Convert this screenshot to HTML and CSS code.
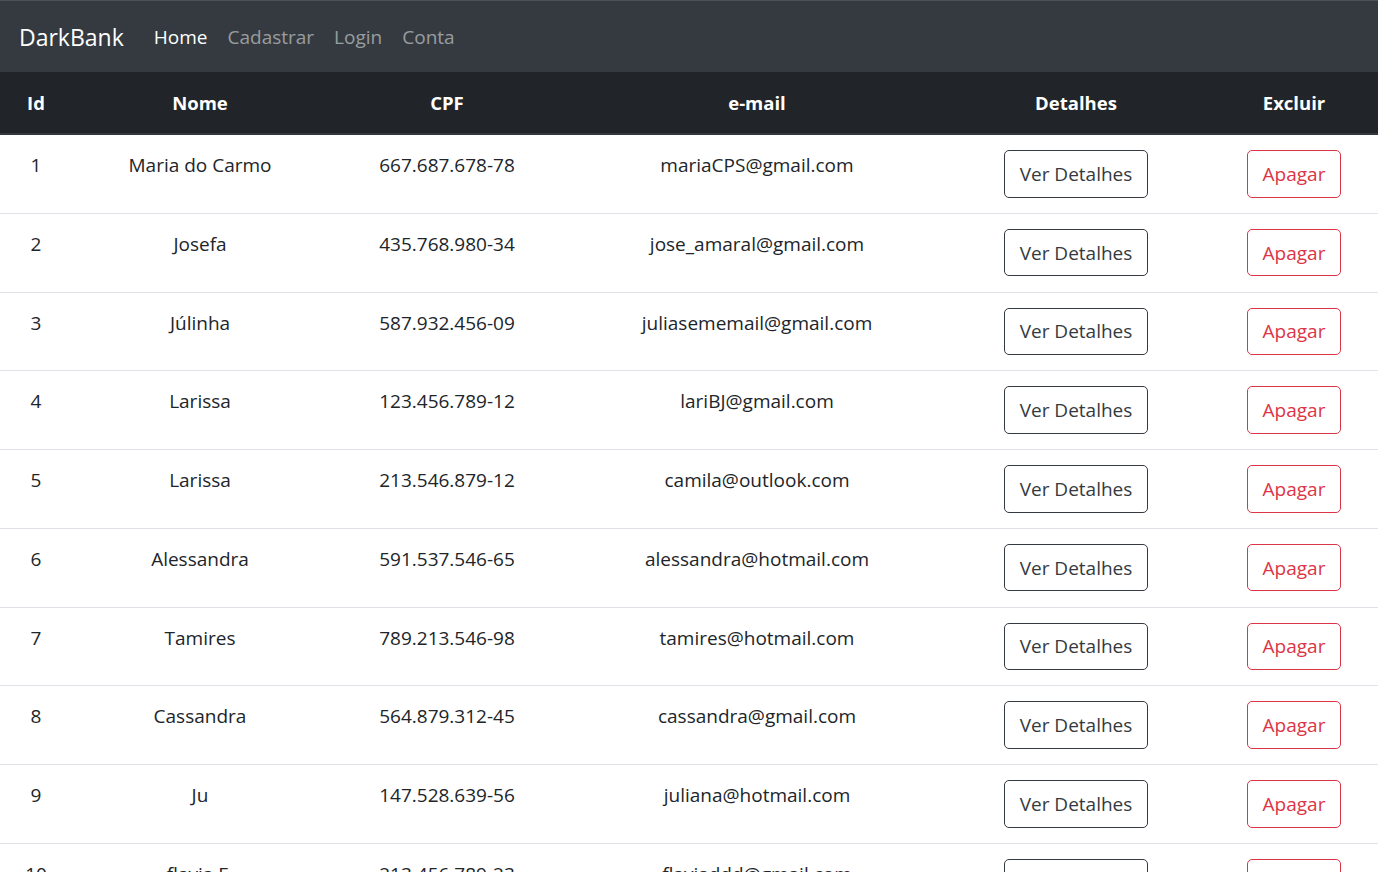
FILE: index.html
```html
<!DOCTYPE html>
<html lang="pt-BR">
<head>
<meta charset="utf-8">
<title>DarkBank</title>
<link rel="stylesheet" href="styles.css">
</head>
<body>
<nav class="navbar">
  <a class="brand" href="#">DarkBank</a>
  <ul class="nav">
    <li><a class="nav-link active" href="#">Home</a></li>
    <li><a class="nav-link" href="#">Cadastrar</a></li>
    <li><a class="nav-link" href="#">Login</a></li>
    <li><a class="nav-link" href="#">Conta</a></li>
  </ul>
</nav>
<table class="table">
  <colgroup>
    <col class="c-id"><col class="c-nome"><col class="c-cpf"><col class="c-email"><col class="c-det"><col class="c-exc">
  </colgroup>
  <thead>
    <tr><th>Id</th><th>Nome</th><th>CPF</th><th>e-mail</th><th>Detalhes</th><th>Excluir</th></tr>
  </thead>
  <tbody>
    <tr><td>1</td><td>Maria do Carmo</td><td>667.687.678-78</td><td>mariaCPS@gmail.com</td><td><a class="btn btn-dark" href="#">Ver Detalhes</a></td><td><a class="btn btn-danger" href="#">Apagar</a></td></tr>
    <tr><td>2</td><td>Josefa</td><td>435.768.980-34</td><td>jose_amaral@gmail.com</td><td><a class="btn btn-dark" href="#">Ver Detalhes</a></td><td><a class="btn btn-danger" href="#">Apagar</a></td></tr>
    <tr><td>3</td><td>Júlinha</td><td>587.932.456-09</td><td>juliasememail@gmail.com</td><td><a class="btn btn-dark" href="#">Ver Detalhes</a></td><td><a class="btn btn-danger" href="#">Apagar</a></td></tr>
    <tr><td>4</td><td>Larissa</td><td>123.456.789-12</td><td>lariBJ@gmail.com</td><td><a class="btn btn-dark" href="#">Ver Detalhes</a></td><td><a class="btn btn-danger" href="#">Apagar</a></td></tr>
    <tr><td>5</td><td>Larissa</td><td>213.546.879-12</td><td>camila@outlook.com</td><td><a class="btn btn-dark" href="#">Ver Detalhes</a></td><td><a class="btn btn-danger" href="#">Apagar</a></td></tr>
    <tr><td>6</td><td>Alessandra</td><td>591.537.546-65</td><td>alessandra@hotmail.com</td><td><a class="btn btn-dark" href="#">Ver Detalhes</a></td><td><a class="btn btn-danger" href="#">Apagar</a></td></tr>
    <tr><td>7</td><td>Tamires</td><td>789.213.546-98</td><td>tamires@hotmail.com</td><td><a class="btn btn-dark" href="#">Ver Detalhes</a></td><td><a class="btn btn-danger" href="#">Apagar</a></td></tr>
    <tr><td>8</td><td>Cassandra</td><td>564.879.312-45</td><td>cassandra@gmail.com</td><td><a class="btn btn-dark" href="#">Ver Detalhes</a></td><td><a class="btn btn-danger" href="#">Apagar</a></td></tr>
    <tr><td>9</td><td>Ju</td><td>147.528.639-56</td><td>juliana@hotmail.com</td><td><a class="btn btn-dark" href="#">Ver Detalhes</a></td><td><a class="btn btn-danger" href="#">Apagar</a></td></tr>
    <tr><td>10</td><td>flavia F.</td><td>213.456.789-23</td><td>flaviaddd@gmail.com</td><td><a class="btn btn-dark" href="#">Ver Detalhes</a></td><td><a class="btn btn-danger" href="#">Apagar</a></td></tr>
  </tbody>
</table>
</body>
</html>
```
FILE: styles.css
```css
html, body {
  margin: 0;
  padding: 0;
}
body {
  font-family: "Segoe UI", "Open Sans", "Noto Sans", sans-serif;
  font-size: 19px;
  line-height: 30px;
  color: #212529;
  background: #fff;
  overflow-x: hidden;
}
.navbar {
  display: flex;
  align-items: center;
  height: 72px;
  box-sizing: border-box;
  padding: 0 20px 0 19px;
  background: #343a40;
  border-top: 1px solid #4d5257;
}
.brand {
  font-size: 23px;
  line-height: 36px;
  color: #fff;
  text-decoration: none;
  margin-right: 20px;
}
.nav {
  display: flex;
  list-style: none;
  margin: 0;
  padding: 0;
}
.nav-link {
  display: block;
  padding: 10px 10px;
  color: rgba(255, 255, 255, 0.5);
  text-decoration: none;
}
.nav-link.active {
  color: #fff;
}
.table {
  width: 1378px;
  border-collapse: collapse;
  table-layout: fixed;
}
.c-id { width: 72px; }
.c-nome { width: 256px; }
.c-cpf { width: 238px; }
.c-email { width: 382px; }
.c-det { width: 256px; }
.c-exc { width: 174px; }
.table th,
.table td {
  padding: 15px;
  text-align: center;
  vertical-align: top;
  white-space: nowrap;
}
.table th:last-child,
.table td:last-child {
  padding-left: 21px;
}
.table thead th {
  padding-top: 16px;
  background: #212529;
  color: #fff;
  font-size: 18.5px;
  font-weight: 700;
  border-bottom: 2px solid #32383e;
}
.table tbody td {
  padding-top: 15.125px;
  padding-bottom: 15.125px;
  border-top: 1px solid #dee2e6;
}
.table tbody tr:first-child td {
  border-top: none;
}
.btn {
  display: inline-block;
  padding: 7.75px 15px;
  font-size: 19px;
  line-height: 30px;
  border: 1px solid;
  border-radius: 5px;
  text-decoration: none;
}
.btn-dark {
  color: #343a40;
  border-color: #343a40;
}
.btn-danger {
  color: #dc3545;
  border-color: #dc3545;
}
```
